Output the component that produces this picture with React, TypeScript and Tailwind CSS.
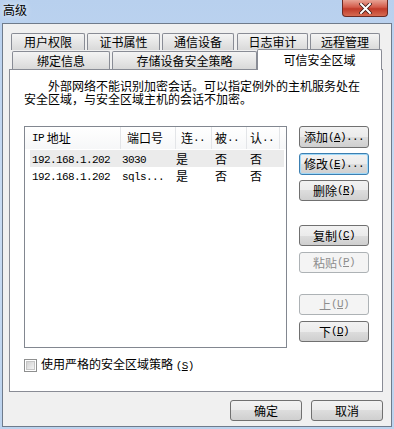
import React from "react";

// ascii bits in the old bitmap font look, half-width mono
function M({ children }: { children: React.ReactNode }) {
  return <span className="font-['Liberation_Mono',monospace] text-[11px] tracking-[-0.6px]">{children}</span>;
}

function Key({ k }: { k: string }) {
  return (
    <M>
      (<span className="underline">{k}</span>)
    </M>
  );
}

function Btn({
  children,
  focus,
  disabled,
  w = "w-[70px]",
  h = "h-[22px]",
  mt = "",
}: {
  children: React.ReactNode;
  focus?: boolean;
  disabled?: boolean;
  w?: string;
  h?: string;
  mt?: string;
}) {
  let look =
    "border-[#707070] bg-[linear-gradient(#f2f2f2,#ebebeb_50%,#dddddd_50%,#cfcfcf)] text-black";
  if (disabled) look = "border-[#adb2b5] bg-[#f4f4f4] text-[#8d8d8d]";
  if (focus)
    look =
      "border-[#3c7fb1] bg-[linear-gradient(#f2f2f2,#ebebeb_50%,#dddddd_50%,#cfcfcf)] text-black shadow-[inset_0_0_0_1px_#9fd8f8]";
  return (
    <div className={`${w} ${h} ${mt} ${look} flex items-center justify-center rounded-[3px] border text-[12px] leading-none`}>
      {children}
    </div>
  );
}

function Tab({ label, w, ml = "" }: { label: string; w: string; ml?: string }) {
  return (
    <div
      className={`${w} ${ml} flex h-full items-center justify-center rounded-t-[2px] border border-b-0 border-[#898c95] bg-linear-to-b from-[#f4f4f4] to-[#d9d9d9] text-[12px] leading-none`}
    >
      {label}
    </div>
  );
}

const rows = [
  { ip: "192.168.1.202", port: "3030", a: "是", b: "否", c: "否", sel: true },
  { ip: "192.168.1.202", port: "sqls...", a: "是", b: "否", c: "否", sel: false },
];

export default function App() {
  return (
    <div className="flex h-[429px] w-[394px] flex-col bg-linear-to-b from-[#b8d0ee] via-[#c9dcf3] to-[#bcd3ee] font-['Noto_Sans_CJK_SC',sans-serif] text-black">
      {/* title bar */}
      <div className="flex h-[23px] shrink-0 items-start justify-between">
        <div className="ml-[3px] mt-[4px] text-[12px] leading-[12px] [text-shadow:0_0_6px_#ffffff]">高级</div>
        <div className="mr-[6px] flex h-[17px] w-[46px] items-center justify-center rounded-b-[4px] border border-t-0 border-[#6b2a24] bg-[linear-gradient(#e8a394,#d35b4a_45%,#c03a29_55%,#d66b52)]">
          <svg width="13" height="11" viewBox="0 0 13 11">
            <path d="M2 1 L11 10 M11 1 L2 10" stroke="#3d1a16" strokeWidth="3.6" strokeLinecap="square" />
            <path d="M2 1 L11 10 M11 1 L2 10" stroke="#ffffff" strokeWidth="2" strokeLinecap="square" />
          </svg>
        </div>
      </div>

      {/* client */}
      <div className="mx-[2px] mb-[2px] flex flex-1 flex-col border border-[#6f7b8b] bg-[#f0f0f0] pl-[6px] pt-[9px]">
        {/* tab rows */}
        <div className="flex h-[17px] w-[374px] pl-[2px]">
          <Tab label="用户权限" w="w-[74px]" />
          <Tab label="证书属性" w="w-[73px]" ml="ml-[2px]" />
          <Tab label="通信设备" w="w-[72px]" ml="ml-[2px]" />
          <Tab label="日志审计" w="w-[71px]" ml="ml-[3px]" />
          <Tab label="远程管理" w="w-[70px]" ml="ml-[2px]" />
        </div>
        <div className="flex h-[19px] w-[374px] items-end pl-[3px]">
          <div className="h-[18px] flex">
            <Tab label="绑定信息" w="w-[98px]" />
            <Tab label="存储设备安全策略" w="w-[145px]" ml="ml-[2px]" />
          </div>
          <div className="relative z-10 mb-[-1px] flex h-[21px] w-[125px] items-center justify-center rounded-t-[2px] border border-b-0 border-[#898c95] bg-white text-[12px] leading-none">
            可信安全区域
          </div>
        </div>

        {/* panel */}
        <div className="flex h-[323px] w-[374px] flex-col border border-[#898c95] bg-white pl-[14px]">
          <div className="mt-[9px] text-[12px] leading-[13px]">
            <div className="pl-[24px]">外部网络不能识别加密会话。可以指定例外的主机服务处在</div>
            <div>安全区域，与安全区域主机的会话不加密。</div>
          </div>

          <div className="mt-[21px] flex">
            {/* list */}
            <div className="flex h-[222px] w-[263px] flex-col border border-[#828790] bg-white">
              <div className="flex h-[22px] bg-linear-to-b from-white to-[#f6f7f8] text-[12px] leading-none">
                <div className="flex w-[96px] items-center border-r border-[#e3e5e8] pl-[7px]">
                  <M>IP</M>&nbsp;地址
                </div>
                <div className="flex w-[55px] items-center border-r border-[#e3e5e8] pl-[6px]">端口号</div>
                <div className="flex w-[36px] items-center border-r border-[#e3e5e8] pl-[5px]">
                  连<M>..</M>
                </div>
                <div className="flex w-[35px] items-center border-r border-[#e3e5e8] pl-[3px]">
                  被<M>..</M>
                </div>
                <div className="flex w-[33px] items-center border-r border-[#e3e5e8] pl-[3px]">
                  认<M>..</M>
                </div>
              </div>
              {rows.map((r, i) => (
                <div
                  key={i}
                  className={`ml-[5px] flex h-[17px] w-[254px] items-center text-[12px] leading-none ${r.sel ? "bg-[#ebebeb]" : ""} ${i === 0 ? "mt-px" : ""}`}
                >
                  <div className="w-[91px] pl-[2px]">
                    <M>{r.ip}</M>
                  </div>
                  <div className="w-[55px] pl-[1px]">
                    <M>{r.port}</M>
                  </div>
                  <div className="w-[36px]">{r.a}</div>
                  <div className="w-[35px] pl-[3px]">{r.b}</div>
                  <div className="w-[33px] pl-[3px]">{r.c}</div>
                </div>
              ))}
            </div>

            {/* side buttons */}
            <div className="ml-[12px] flex flex-col">
              <Btn>
                添加<Key k="A" />
                <M>...</M>
              </Btn>
              <Btn focus mt="mt-[5px]">
                修改<Key k="E" />
                <M>...</M>
              </Btn>
              <Btn mt="mt-[5px]" h="h-[21px]">
                删除<Key k="R" />
              </Btn>
              <Btn mt="mt-[24px]" h="h-[21px]">
                复制<Key k="C" />
              </Btn>
              <Btn disabled mt="mt-[6px]" h="h-[21px]">
                粘贴<Key k="P" />
              </Btn>
              <Btn disabled mt="mt-[21px]" h="h-[21px]">
                上<Key k="U" />
              </Btn>
              <Btn mt="mt-[6px]" h="h-[21px]">
                下<Key k="D" />
              </Btn>
            </div>
          </div>

          <div className="mt-[10px] flex items-center text-[12px] leading-none">
            <div className="flex h-[13px] w-[13px] items-center justify-center border border-[#8e8f8f] bg-white">
              <div className="h-[9px] w-[9px] border border-[#c6c6c6] bg-linear-to-br from-[#d2d2d2] to-[#f4f4f4]" />
            </div>
            <span className="ml-[4px]">
              使用严格的安全区域策略 <Key k="S" />
            </span>
          </div>
        </div>

        {/* bottom buttons */}
        <div className="mt-[8px] flex w-[374px] justify-end gap-[9px]">
          <Btn w="w-[72px]" h="h-[21px]">
            确定
          </Btn>
          <Btn w="w-[72px]" h="h-[21px]">
            取消
          </Btn>
        </div>
      </div>
    </div>
  );
}
